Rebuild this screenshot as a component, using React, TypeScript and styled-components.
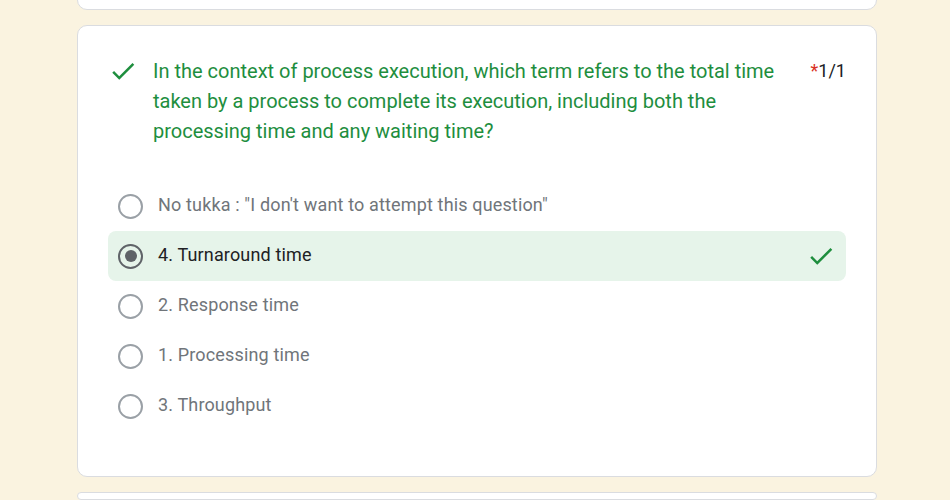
import styled, { createGlobalStyle } from "styled-components";

const GlobalStyle = createGlobalStyle`
  html, body {
    margin: 0;
    padding: 0;
    background: #faf3e0;
    font-family: Roboto, "Noto Sans", Arial, sans-serif;
    overflow: hidden;
  }
`;

const options = [
  { key: "none", label: `No tukka : "I don't want to attempt this question"` },
  { key: "4", label: "4. Turnaround time", checked: true, correct: true },
  { key: "2", label: "2. Response time" },
  { key: "1", label: "1. Processing time" },
  { key: "3", label: "3. Throughput" },
];

const CheckIcon = ({ color = "#1e8e3e" }: { color?: string }) => (
  <svg width="30" height="30" viewBox="0 0 24 24">
    <path
      fill={color}
      d="M9 16.17L4.83 12l-1.42 1.41L9 19 21 7l-1.41-1.41z"
    />
  </svg>
);

const App = () => {
  return (
    <Page>
      <GlobalStyle />
      <PrevCard />
      <Card>
        <Header>
          <IconBox>
            <CheckIcon />
          </IconBox>
          <Question>
            In the context of process execution, which term refers to the total
            time taken by a process to complete its execution, including both
            the processing time and any waiting time?
          </Question>
          <Score>
            <Star>*</Star>1/1
          </Score>
        </Header>
        <OptionList>
          {options.map((o) => (
            <Option key={o.key} correct={!!o.correct}>
              <Radio checked={!!o.checked} />
              <OptionLabel checked={!!o.checked}>{o.label}</OptionLabel>
              {o.correct && (
                <IconBox>
                  <CheckIcon />
                </IconBox>
              )}
            </Option>
          ))}
        </OptionList>
      </Card>
      <NextCard />
    </Page>
  );
};

const Page = styled.div`
  width: 800px;
  margin: 0 auto 0 77px;
  display: flex;
  flex-direction: column;
  gap: 15px;
`;

const CardBase = styled.div`
  background: #fff;
  border: 1px solid #dadce0;
  border-radius: 10px;
  box-sizing: border-box;
`;

const PrevCard = styled(CardBase)`
  height: 41px;
  margin-top: -31px;
`;

const NextCard = styled(CardBase)`
  height: 8px;
`;

const Card = styled(CardBase)`
  padding: 30px 30px 45px 30px;
  display: flex;
  flex-direction: column;
  gap: 35px;
`;

const Header = styled.div`
  display: flex;
  align-items: flex-start;
`;

const IconBox = styled.div`
  width: 30px;
  height: 30px;
  flex-shrink: 0;
  display: flex;
`;

const Question = styled.div`
  flex: 1;
  margin-left: 15px;
  margin-right: 30px;
  font-size: 20px;
  line-height: 30px;
  color: #1e8e3e;
`;

const Score = styled.div`
  font-size: 18px;
  line-height: 30px;
  color: #202124;
  white-space: nowrap;
`;

const Star = styled.span`
  color: #d93025;
`;

const OptionList = styled.div`
  display: flex;
  flex-direction: column;
`;

const Option = styled.div<{ correct: boolean }>`
  height: 50px;
  display: flex;
  align-items: center;
  padding: 0 10px;
  border-radius: 8px;
  background: ${(p) => (p.correct ? "#e6f4ea" : "transparent")};
`;

const Radio = styled.div<{ checked: boolean }>`
  width: 25px;
  height: 25px;
  box-sizing: border-box;
  border-radius: 50%;
  border: 2.5px solid ${(p) => (p.checked ? "#5f6368" : "#9aa0a6")};
  flex-shrink: 0;
  display: flex;
  align-items: center;
  justify-content: center;
  &::after {
    content: "";
    display: ${(p) => (p.checked ? "block" : "none")};
    width: 12px;
    height: 12px;
    border-radius: 50%;
    background: #5f6368;
  }
`;

const OptionLabel = styled.div<{ checked: boolean }>`
  flex: 1;
  margin-left: 15px;
  font-size: 18px;
  line-height: 24px;
  letter-spacing: 0.15px;
  padding-bottom: 2px;
  color: ${(p) => (p.checked ? "#202124" : "#70757a")};
`;

export default App;
